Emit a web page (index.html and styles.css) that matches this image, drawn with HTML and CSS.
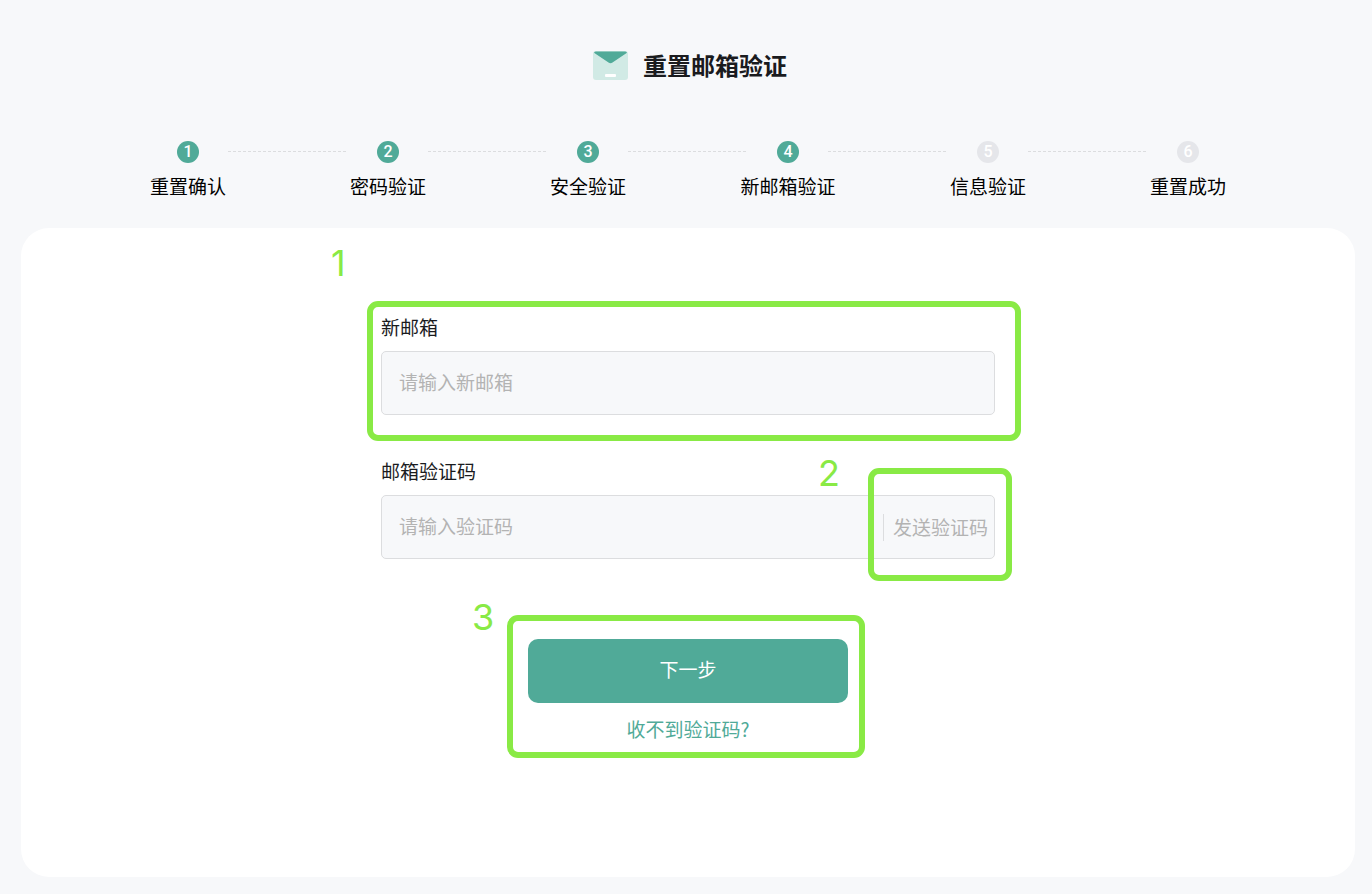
FILE: index.html
```html
<!DOCTYPE html>
<html lang="zh-CN">
<head>
<meta charset="utf-8">
<meta name="viewport" content="width=device-width, initial-scale=1">
<title>重置邮箱验证</title>
<link rel="stylesheet" href="styles.css">
</head>
<body class="page">
<header class="header">
  <svg class="logo" viewBox="0 0 35 29" aria-hidden="true">
    <rect width="35" height="29" rx="3" fill="#d1eae5"/>
    <path d="M1 1.8Q1.600 0.500 3 0.500H32Q33.400 0.500 34 1.800L19.500 11.600Q17.500 13 15.500 11.600Z" fill="#50aa98"/>
    <rect x="12" y="23" width="11" height="3" rx="1" fill="#fff"/>
  </svg>
  <h1 class="title">重置邮箱验证</h1>
</header>
<ol class="steps">
  <li class="step"><span class="step-num">1</span><span>重置确认</span></li>
  <li class="step-line" role="presentation"></li>
  <li class="step"><span class="step-num">2</span><span>密码验证</span></li>
  <li class="step-line" role="presentation"></li>
  <li class="step"><span class="step-num">3</span><span>安全验证</span></li>
  <li class="step-line" role="presentation"></li>
  <li class="step" aria-current="step"><span class="step-num">4</span><span>新邮箱验证</span></li>
  <li class="step-line" role="presentation"></li>
  <li class="step"><span class="step-num step-num-todo">5</span><span>信息验证</span></li>
  <li class="step-line" role="presentation"></li>
  <li class="step"><span class="step-num step-num-todo">6</span><span>重置成功</span></li>
</ol>
<main class="card">
  <form class="form">
    <div class="field">
      <label class="label" for="email">新邮箱</label>
      <div class="control"><input class="input" id="email" type="email" placeholder="请输入新邮箱"></div>
      <span class="mark mark-email"><span class="mark-num">1</span></span>
    </div>
    <div class="field">
      <label class="label" for="code">邮箱验证码</label>
      <div class="control">
        <input class="input" id="code" type="text" placeholder="请输入验证码">
        <span class="divider"></span>
        <button class="send" type="button">发送验证码</button>
        <span class="mark mark-code"><span class="mark-num">2</span></span>
      </div>
    </div>
    <div class="actions">
      <button class="next" type="button">下一步</button>
      <a class="help" href="#">收不到验证码?</a>
      <span class="mark mark-actions"><span class="mark-num">3</span></span>
    </div>
  </form>
</main>
</body>
</html>
```

FILE: styles.css
```css
*, *::before, *::after { box-sizing: border-box; }

.page {
  display: flex;
  flex-direction: column;
  min-height: 100vh;
  margin: 0;
  padding: 47px 17px 17px 21px;
  background: #f7f8fa;
  color: #000;
  font-family: "Noto Sans CJK SC", sans-serif;
  font-size: 19px;
  line-height: 28px;
}

.header {
  display: flex;
  align-items: center;
  justify-content: center;
  gap: 15px;
  padding-left: 4px;
}
.logo { width: 35px; height: 29px; }
.title {
  margin: 0;
  color: #1a1b1e;
  font-size: 24px;
  font-weight: 700;
  line-height: 36px;
}

.steps {
  display: flex;
  justify-content: center;
  margin: 58px 0 28px;
  padding: 0;
  list-style: none;
}
.step {
  display: flex;
  flex: 0 0 80px;
  flex-direction: column;
  align-items: center;
  gap: 9px;
  min-width: 0;
  white-space: nowrap;
}
.step-num {
  width: 22px;
  height: 22px;
  border-radius: 50%;
  background: #50aa98;
  color: #fff;
  font-family: Roboto, sans-serif;
  font-size: 16px;
  font-weight: 500;
  line-height: 22px;
  text-align: center;
}
.step-num-todo { background: #e5e6ea; }
.step-line {
  flex: 0 1 120px;
  height: 1px;
  margin-top: 10px;
  background: repeating-linear-gradient(to right, #dcdddf 0 3px, transparent 3px 5px);
}

.card {
  flex: 1;
  padding: 85px 24px 60px;
  border-radius: 28px;
  background: #fff;
}
.form {
  display: flex;
  flex-direction: column;
  gap: 42px;
  max-width: 614px;
  margin: 0 auto;
}
.field {
  position: relative;
  display: flex;
  flex-direction: column;
  gap: 10px;
}
.label { color: #1a1b1e; }
.control {
  position: relative;
  display: flex;
  align-items: center;
  height: 64px;
  padding: 0 6px 0 17px;
  border: 1px solid #dcdddf;
  border-radius: 5px;
  background: #f7f8fa;
}
.input {
  flex: 1;
  min-width: 0;
  height: 100%;
  padding: 0 0 4px;
  border: 0;
  outline: 0;
  background: transparent;
  color: #1a1b1e;
  font: inherit;
}
.input::placeholder { color: #b3b3b3; opacity: 1; }
.divider {
  width: 1px;
  height: 27px;
  margin-right: 9px;
  background: #dcdddf;
}
.send {
  padding: 0;
  border: 0;
  background: none;
  color: #b3b3b3;
  font: inherit;
}

.actions {
  position: relative;
  display: flex;
  flex-direction: column;
  align-items: center;
  align-self: center;
  gap: 12px;
  width: 320px;
  max-width: 100%;
  margin-top: 38px;
}
.next {
  width: 100%;
  height: 64px;
  padding: 0 0 4px;
  border: 0;
  border-radius: 10px;
  background: #50aa98;
  color: #fff;
  font: inherit;
}
.help { color: #50aa98; text-decoration: none; }

/* Numbered outlines laid over the form */
.mark {
  position: absolute;
  border: 6px solid #89ea45;
  border-radius: 11px;
  pointer-events: none;
}
.mark-email { inset: -12px -26px -26px -14px; }
.mark-code { inset: -28px -18px -23px auto; width: 144px; }
.mark-actions { inset: -24px -17px -15px -21px; }
.mark-num {
  position: absolute;
  color: #89ea45;
  font-family: Inter, sans-serif;
  font-size: 36px;
  font-weight: 400;
  line-height: 36px;
}
.mark-email .mark-num { top: -62px; left: -42px; }
.mark-code .mark-num { top: -19px; left: -56px; }
.mark-actions .mark-num { top: -22px; left: -41px; }
```
